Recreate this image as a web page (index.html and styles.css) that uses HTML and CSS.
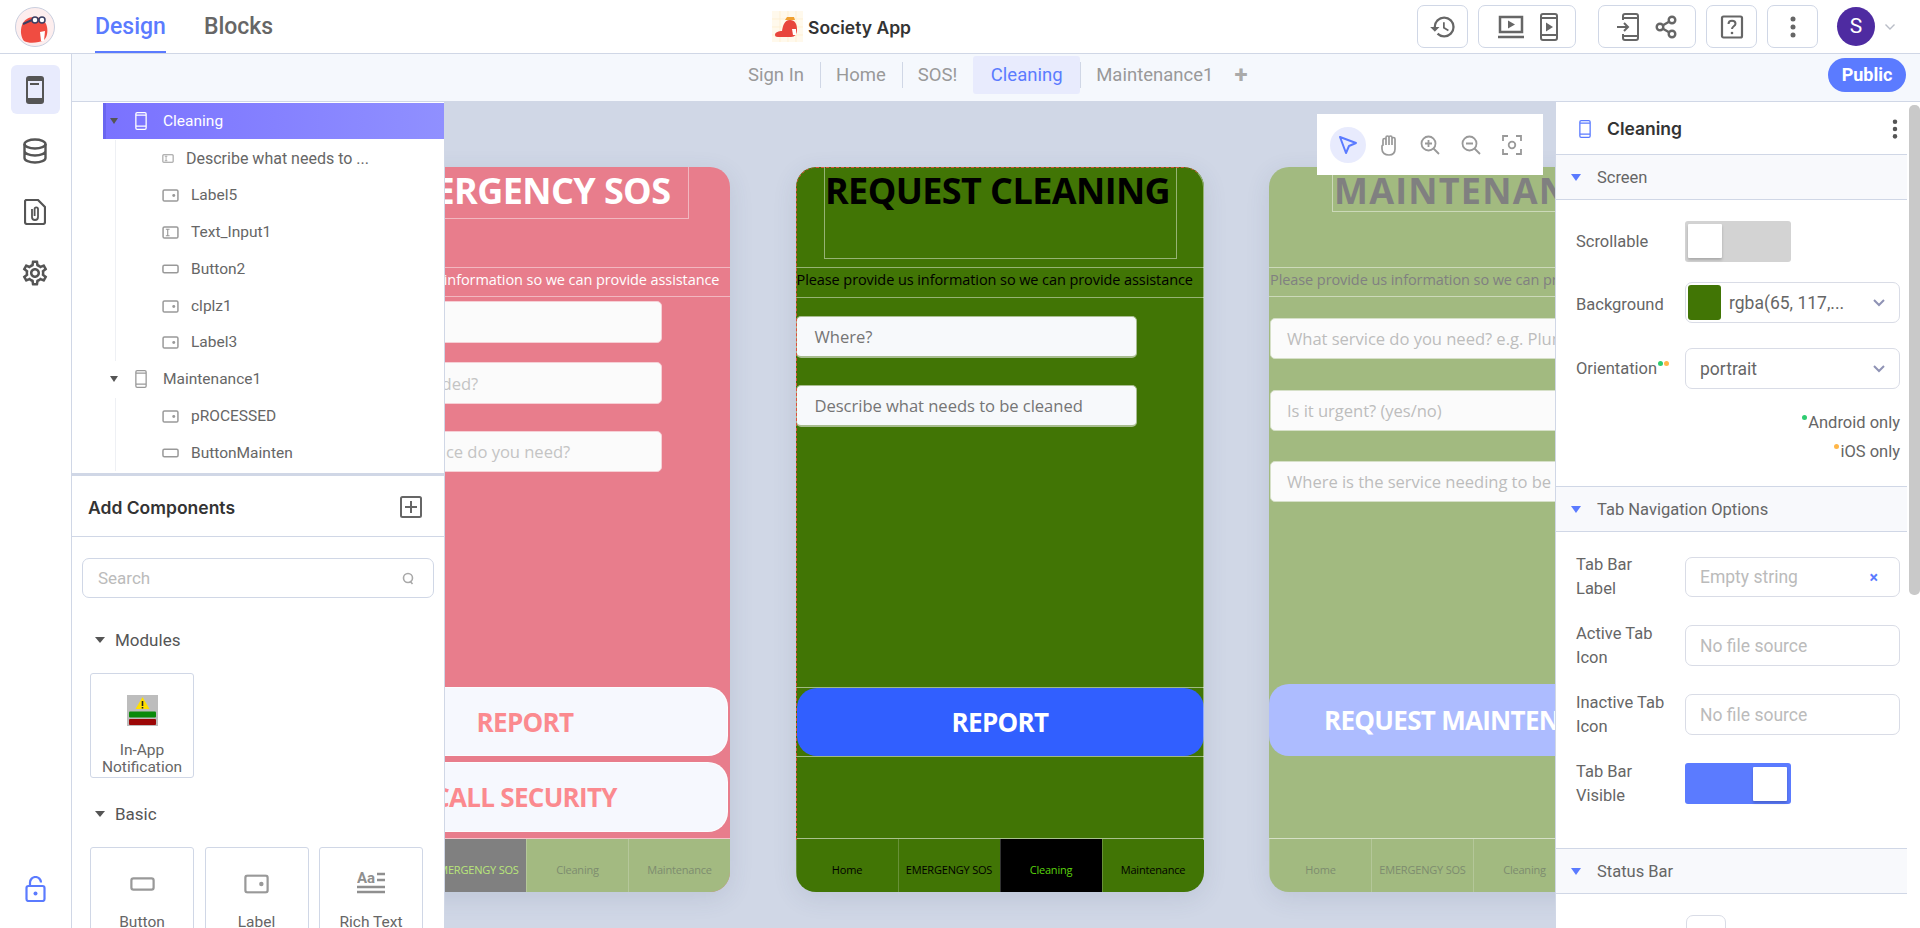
FILE: index.html
```html
<!DOCTYPE html>
<html lang="en">
<head>
  <meta charset="UTF-8">
  <title>Society App</title>
  <link rel="stylesheet" href="styles.css">
</head>
<body>
<svg class="sprites" width="0" height="0">
  <symbol id="i-phone" viewBox="0 0 18 28"><path d="M3 1h12a2 2 0 0 1 2 2v22a2 2 0 0 1-2 2H3a2 2 0 0 1-2-2V3a2 2 0 0 1 2-2zM1 5h16M1 22h16" fill="none" stroke="currentColor" stroke-width="2"/></symbol>
  <symbol id="i-label" viewBox="0 0 18 14"><rect x="1" y="1" width="16" height="12" rx="1.5" fill="none" stroke="currentColor" stroke-width="1.6"/><circle cx="12.5" cy="7" r="1.6" fill="currentColor"/></symbol>
  <symbol id="i-input" viewBox="0 0 18 14"><rect x="1" y="1" width="16" height="12" rx="1.5" fill="none" stroke="currentColor" stroke-width="1.6"/><path d="M4 3.5h4M4 10.5h4M6 3.5v7" fill="none" stroke="currentColor" stroke-width="1.2"/></symbol>
  <symbol id="i-button" viewBox="0 0 18 10"><rect x="1" y="1" width="16" height="8" rx="1.5" fill="none" stroke="currentColor" stroke-width="1.6"/></symbol>
  <symbol id="i-dots" viewBox="0 0 6 24"><circle cx="3" cy="4" r="2.5" fill="currentColor"/><circle cx="3" cy="12" r="2.5" fill="currentColor"/><circle cx="3" cy="20" r="2.5" fill="currentColor"/></symbol>
  <symbol id="i-gear" viewBox="0 0 24 24"><path fill="currentColor" d="M19.43 12.98c.04-.32.07-.64.07-.98 0-.34-.03-.66-.07-.98l2.11-1.65c.19-.15.24-.42.12-.64l-2-3.46c-.09-.16-.26-.25-.44-.25-.06 0-.12.01-.17.03l-2.49 1c-.52-.4-1.08-.73-1.69-.98l-.38-2.65C14.46 2.18 14.25 2 14 2h-4c-.25 0-.46.18-.49.42l-.38 2.65c-.61.25-1.17.59-1.69.98l-2.49-1c-.06-.02-.12-.03-.18-.03-.17 0-.34.09-.43.25l-2 3.46c-.13.22-.07.49.12.64l2.11 1.65c-.04.32-.07.65-.07.98 0 .33.03.66.07.98l-2.11 1.65c-.19.15-.24.42-.12.64l2 3.46c.09.16.26.25.44.25.06 0 .12-.01.17-.03l2.49-1c.52.4 1.08.73 1.69.98l.38 2.65c.03.24.24.42.49.42h4c.25 0 .46-.18.49-.42l.38-2.65c.61-.25 1.17-.59 1.69-.98l2.49 1c.06.02.12.03.18.03.17 0 .34-.09.43-.25l2-3.46c.12-.22.07-.49-.12-.64l-2.11-1.65zm-1.98-1.71c.04.31.05.52.05.73 0 .21-.02.43-.05.73l-.14 1.13.89.7 1.08.84-.7 1.21-1.27-.51-1.04-.42-.9.68c-.43.32-.84.56-1.25.73l-1.06.43-.16 1.13-.2 1.35h-1.4l-.19-1.35-.16-1.13-1.06-.43c-.43-.18-.83-.41-1.23-.71l-.91-.7-1.06.43-1.27.51-.7-1.21 1.08-.84.89-.7-.14-1.13c-.03-.31-.05-.54-.05-.74s.02-.43.05-.73l.14-1.13-.89-.7-1.08-.84.7-1.21 1.27.51 1.04.42.9-.68c.43-.32.84-.56 1.25-.73l1.06-.43.16-1.13.2-1.35h1.39l.19 1.35.16 1.13 1.06.43c.43.18.83.41 1.23.71l.91.7 1.06-.43 1.27-.51.7 1.21-1.07.85-.89.7.14 1.13zM12 8c-2.21 0-4 1.79-4 4s1.79 4 4 4 4-1.79 4-4-1.79-4-4-4zm0 6c-1.1 0-2-.9-2-2s.9-2 2-2 2 .9 2 2-.9 2-2 2z"/></symbol>
</svg>

<!-- Top bar -->
<header class="topbar">
  <div class="brand">
    <svg width="40" height="40" viewBox="0 0 40 40">
      <circle cx="20" cy="20" r="19.5" fill="#fdeeee" stroke="#c9cfdf"/>
      <path d="M9 34c-3-4-4-10-2-16 2-5 6-8 12-8 7 0 12 4 13 10 1 5 0 10-3 13-5 3-15 4-20 1z" fill="#f04c41"/>
      <path d="M8 17l9-4" stroke="#3a3f63" stroke-width="2"/>
      <circle cx="20" cy="13" r="3" fill="#fff" stroke="#3a3f63" stroke-width="1.5"/>
      <circle cx="27" cy="13" r="3" fill="#fff" stroke="#3a3f63" stroke-width="1.5"/>
      <path d="M25 25l1 9h3l1-10z" fill="#fff"/>
    </svg>
  </div>
  <nav class="mode-tabs">
    <a class="mode-tab active">Design</a>
    <a class="mode-tab">Blocks</a>
  </nav>
  <div class="app-title">
    <svg class="app-logo" width="31" height="31" viewBox="0 0 31 31">
      <rect width="31" height="31" fill="#fff9ec"/>
      <path d="M0 8h31M0 16h31M0 24h31M8 0v31M16 0v31M24 0v31" stroke="#fdeccb" stroke-width=".7"/>
      <path d="M3 24c0-3 4-4 7-4 1-5 2-11 8-11 5 0 7 4 7 9 0 5-2 8-6 8H8c-3 0-5 0-5-2z" fill="#e8453c"/>
      <path d="M13 9l2-3h7l1 3z" fill="#f0a030"/>
      <path d="M20 18h4v6h-3z" fill="#fff"/>
    </svg>
    <span>Society App</span>
  </div>
  <div class="actions">
    <div class="action-group single">
      <svg width="28" height="28" viewBox="0 0 24 24"><path fill="currentColor" d="M13 3a9 9 0 0 0-9 9H1l3.89 3.89.07.14L9 12H6c0-3.87 3.13-7 7-7s7 3.13 7 7-3.13 7-7 7c-1.93 0-3.68-.79-4.94-2.06l-1.42 1.42A8.954 8.954 0 0 0 13 21a9 9 0 0 0 0-18zm-1 5v5l4.28 2.54.72-1.21-3.5-2.08V8H12z"/></svg>
    </div>
    <div class="action-group">
      <svg width="28" height="26" viewBox="0 0 28 26"><path d="M3 3h22v15H3zM1 23h26" fill="none" stroke="currentColor" stroke-width="2.5"/><path d="M11 6.5l7 4-7 4z" fill="currentColor"/></svg>
      <svg width="18" height="28" viewBox="0 0 18 28"><use href="#i-phone"/><path d="M6 9.5l7 4.5-7 4.5z" fill="currentColor"/></svg>
    </div>
    <div class="action-group gap-left">
      <svg width="22" height="28" viewBox="0 0 22 28"><path d="M6 7V3a2 2 0 0 1 2-2h11a2 2 0 0 1 2 2v22a2 2 0 0 1-2 2H8a2 2 0 0 1-2-2v-4M6 5h15M6 23h15" fill="none" stroke="currentColor" stroke-width="2"/><path d="M0 14h10M7 10l4 4-4 4" fill="none" stroke="currentColor" stroke-width="2"/></svg>
      <svg width="22" height="24" viewBox="0 0 22 24"><g fill="none" stroke="currentColor" stroke-width="2.4"><circle cx="5" cy="12" r="3.3"/><circle cx="17" cy="5" r="3.3"/><circle cx="17" cy="19" r="3.3"/><path d="M8 10.3l6-3.5M8 13.7l6 3.5"/></g></svg>
    </div>
    <div class="action-group single">
      <svg width="24" height="24" viewBox="0 0 24 24"><rect x="2" y="1.5" width="20" height="21" rx="1.5" fill="none" stroke="currentColor" stroke-width="2.2"/><path d="M8.5 9c0-2 1.5-3.3 3.5-3.3S15.500 7 15.500 8.700c0 2.600-3.500 2.600-3.500 5.300" fill="none" stroke="currentColor" stroke-width="2"/><circle cx="12" cy="18" r="1.3" fill="currentColor"/></svg>
    </div>
    <div class="action-group single">
      <svg width="6" height="24"><use href="#i-dots"/></svg>
    </div>
    <div class="avatar">S</div>
    <svg class="avatar-caret" width="10" height="6" viewBox="0 0 10 6"><path d="M.5.5L5 5 9.5.5" fill="none" stroke="#b9bdc7" stroke-width="1.4"/></svg>
  </div>
</header>

<div class="shell">
  <!-- Left icon rail -->
  <aside class="rail">
    <div class="rail-item active">
      <svg width="18" height="28" viewBox="0 0 18 28"><path fill="currentColor" d="M3 0h12a3 3 0 0 1 3 3v22a3 3 0 0 1-3 3H3a3 3 0 0 1-3-3V3a3 3 0 0 1 3-3z"/><rect x="2" y="5" width="14" height="17" fill="#e8ebfd"/><rect x="4" y="7" width="9" height="2" fill="currentColor"/></svg>
    </div>
    <div class="rail-item">
      <svg width="24" height="26" viewBox="0 0 24 26"><g fill="none" stroke="currentColor" stroke-width="2.4"><ellipse cx="12" cy="6" rx="10.5" ry="4.5"/><path d="M1.5 6v14c0 2.5 4.700 4.500 10.500 4.500S22.500 22.500 22.500 20V6M1.500 13c0 2.500 4.700 4.500 10.500 4.500S22.500 15.500 22.500 13"/></g></svg>
    </div>
    <div class="rail-item">
      <svg width="22" height="26" viewBox="0 0 22 26"><path d="M2 1h12l7 7v15a2 2 0 0 1-2 2H3a2 2 0 0 1-2-2V2z" fill="none" stroke="currentColor" stroke-width="2.2"/><path d="M8 10v8a3 3 0 0 0 6 0v-8a1.7 1.7 0 0 0-3.4 0v7" fill="none" stroke="currentColor" stroke-width="1.8"/></svg>
    </div>
    <div class="rail-item">
      <svg width="30" height="30"><use href="#i-gear"/></svg>
    </div>
    <div class="rail-lock">
      <svg width="21" height="26" viewBox="0 0 21 26"><path d="M5 10V6.500a5.500 5.500 0 0 1 11 0" fill="none" stroke="currentColor" stroke-width="2.2"/><rect x="1.5" y="10" width="18" height="15" rx="2" fill="none" stroke="currentColor" stroke-width="2.2"/><circle cx="10.5" cy="17.5" r="2" fill="currentColor"/></svg>
    </div>
  </aside>

  <main class="workspace">
    <!-- Screen tabs -->
    <div class="screen-tabs">
      <a class="screen-tab">Sign In</a>
      <a class="screen-tab">Home</a>
      <a class="screen-tab">SOS!</a>
      <a class="screen-tab active">Cleaning</a>
      <a class="screen-tab last">Maintenance1</a>
      <span class="add-screen">+</span>
      <span class="public-pill">Public</span>
    </div>

    <div class="canvas">
      <!-- Emergency phone -->
      <section class="phone phone-sos">
        <div class="screen">
          <div class="title">EMERGENCY SOS</div>
          <div class="subtitle">Please provide us information so we can provide assistance</div>
          <div class="field f1"></div>
          <div class="field f2">What is needed?</div>
          <div class="field f3">What service do you need?</div>
          <div class="cta cta1">REPORT</div>
          <div class="cta cta2">CALL SECURITY</div>
        </div>
        <div class="tabbar">
          <span class="tab">Home</span>
          <span class="tab active">EMERGENGY SOS</span>
          <span class="tab">Cleaning</span>
          <span class="tab">Maintenance</span>
        </div>
      </section>

      <!-- Cleaning phone -->
      <section class="phone phone-clean">
        <div class="screen">
          <div class="title">REQUEST CLEANING</div>
          <div class="subtitle">Please provide us information so we can provide assistance</div>
          <div class="field f1">Where?</div>
          <div class="field f2">Describe what needs to be cleaned</div>
          <div class="cta-box"><div class="cta">REPORT</div></div>
        </div>
        <div class="tabbar">
          <span class="tab">Home</span>
          <span class="tab">EMERGENGY SOS</span>
          <span class="tab active">Cleaning</span>
          <span class="tab">Maintenance</span>
        </div>
      </section>

      <!-- Maintenance phone -->
      <section class="phone phone-maint">
        <div class="screen">
          <div class="title">MAINTENANCE</div>
          <div class="subtitle">Please provide us information so we can provide assistance</div>
          <div class="field f1">What service do you need? e.g. Plumbing</div>
          <div class="field f2">Is it urgent? (yes/no)</div>
          <div class="field f3">Where is the service needing to be done?</div>
          <div class="cta">REQUEST MAINTENANCE</div>
        </div>
        <div class="tabbar">
          <span class="tab">Home</span>
          <span class="tab">EMERGENGY SOS</span>
          <span class="tab">Cleaning</span>
          <span class="tab">Maintenance</span>
        </div>
      </section>

      <!-- Left panel: tree and components -->
      <aside class="left-panel">
        <div class="tree">
          <div class="tree-row selected">
            <i class="caret"></i>
            <svg class="tree-screen" width="12" height="18"><use href="#i-phone"/></svg>
            <span>Cleaning</span>
          </div>
          <div class="tree-children">
            <div class="tree-row child small"><svg width="12" height="9"><use href="#i-input"/></svg><span>Describe what needs to ...</span></div>
            <div class="tree-row child"><svg width="17" height="13"><use href="#i-label"/></svg><span>Label5</span></div>
            <div class="tree-row child"><svg width="17" height="13"><use href="#i-input"/></svg><span>Text_Input1</span></div>
            <div class="tree-row child"><svg width="17" height="10"><use href="#i-button"/></svg><span>Button2</span></div>
            <div class="tree-row child"><svg width="17" height="13"><use href="#i-label"/></svg><span>clplz1</span></div>
            <div class="tree-row child"><svg width="17" height="13"><use href="#i-label"/></svg><span>Label3</span></div>
          </div>
          <div class="tree-row">
            <i class="caret"></i>
            <svg class="tree-screen" width="12" height="18"><use href="#i-phone"/></svg>
            <span>Maintenance1</span>
          </div>
          <div class="tree-children">
            <div class="tree-row child"><svg width="17" height="13"><use href="#i-label"/></svg><span>pROCESSED</span></div>
            <div class="tree-row child"><svg width="17" height="10"><use href="#i-button"/></svg><span>ButtonMainten</span></div>
          </div>
        </div>

        <div class="add-head">
          <h3>Add Components</h3>
          <svg width="22" height="22" viewBox="0 0 22 22"><rect x="1" y="1" width="20" height="20" rx="1.5" fill="none" stroke="#666" stroke-width="2"/><path d="M11 5v12M5 11h12" stroke="#666" stroke-width="2"/></svg>
        </div>
        <div class="search">
          <input type="text" placeholder="Search">
          <svg width="12" height="13" viewBox="0 0 12 13"><circle cx="6" cy="6" r="4.5" fill="none" stroke="#a9a9a9" stroke-width="1.6"/><path d="M8 9l2.5 3" stroke="#a9a9a9" stroke-width="1.6"/></svg>
        </div>

        <div class="group-head"><i class="caret"></i>Modules</div>
        <div class="cards">
          <div class="card">
            <svg class="module-icon" width="31" height="31" viewBox="0 0 31 31">
              <rect width="31" height="31" fill="#bdbdbd"/>
              <path d="M15.5 2l7 12h-14z" fill="#ffdf00"/>
              <path d="M15.5 6v5M15.5 12v1.5" stroke="#222" stroke-width="1.6"/>
              <rect x="2" y="16.5" width="27" height="6" rx="1" fill="#0a8a0a"/>
              <rect x="2" y="24" width="27" height="6" rx="1" fill="#9c0606"/>
            </svg>
            <span class="card-name">In-App Notification</span>
          </div>
        </div>

        <div class="group-head basic"><i class="caret"></i>Basic</div>
        <div class="cards">
          <div class="card">
            <svg class="basic-icon" width="25" height="15" viewBox="0 0 18 10"><use href="#i-button"/></svg>
            <span class="card-name">Button</span>
          </div>
          <div class="card">
            <svg class="basic-icon" width="25" height="20" viewBox="0 0 18 14"><use href="#i-label"/></svg>
            <span class="card-name">Label</span>
          </div>
          <div class="card">
            <svg class="basic-icon rich" width="28" height="24" viewBox="0 0 28 24">
              <text x="0" y="13" font-family="Roboto" font-weight="700" font-size="15" fill="#8f8f8f">Aa</text>
              <path d="M20 4h8M20 10h8M0 17h28M0 22h28" stroke="#8f8f8f" stroke-width="2.5"/>
            </svg>
            <span class="card-name">Rich Text</span>
          </div>
        </div>
      </aside>

      <!-- Floating canvas tools -->
      <div class="tools">
        <span class="tool active">
          <svg width="20" height="20" viewBox="0 0 20 20"><path d="M2 2l16 6-7 3-3 7z" fill="none" stroke="currentColor" stroke-width="2" stroke-linejoin="round"/></svg>
        </span>
        <span class="tool">
          <svg width="20" height="22" viewBox="0 0 20 22"><path d="M4 11V6a1.5 1.5 0 0 1 3 0V3.5a1.5 1.5 0 0 1 3 0 1.5 1.5 0 0 1 3 0V5a1.5 1.5 0 0 1 3 0v10c0 3.5-2 6-6 6s-7-2-7-6v-3a1.5 1.5 0 0 1 1-1zM7 6v5M10 3.5V11M13 3.5V11" fill="none" stroke="currentColor" stroke-width="1.7"/></svg>
        </span>
        <span class="tool">
          <svg width="20" height="20" viewBox="0 0 20 20"><circle cx="8.5" cy="8.5" r="7" fill="none" stroke="currentColor" stroke-width="1.8"/><path d="M13.5 13.5L19 19M8.5 5v7M5 8.5h7" stroke="currentColor" stroke-width="1.8"/></svg>
        </span>
        <span class="tool">
          <svg width="20" height="20" viewBox="0 0 20 20"><circle cx="8.5" cy="8.5" r="7" fill="none" stroke="currentColor" stroke-width="1.8"/><path d="M13.5 13.5L19 19M5 8.5h7" stroke="currentColor" stroke-width="1.8"/></svg>
        </span>
        <span class="tool">
          <svg width="20" height="20" viewBox="0 0 20 20"><path d="M1 6V1h5M14 1h5v5M19 14v5h-5M6 19H1v-5" fill="none" stroke="currentColor" stroke-width="1.8"/><circle cx="10" cy="10" r="3.3" fill="none" stroke="currentColor" stroke-width="1.8"/></svg>
        </span>
      </div>

      <!-- Right panel: properties -->
      <aside class="props">
        <div class="props-inner">
          <div class="props-head">
            <svg class="props-phone" width="12" height="18"><use href="#i-phone"/></svg>
            <h3>Cleaning</h3>
            <svg class="props-dots" width="6" height="22" viewBox="0 0 6 24"><use href="#i-dots"/></svg>
          </div>

          <div class="section-head"><i class="caret blue"></i>Screen</div>
          <div class="fields screen-fields">
            <div class="row">
              <label>Scrollable</label>
              <span class="toggle"><i class="knob"></i></span>
            </div>
            <div class="row">
              <label class="low">Background</label>
              <div class="select color-select">
                <i class="swatch"></i><span>rgba(65, 117,...</span>
                <svg width="12" height="8" viewBox="0 0 12 8"><path d="M1 1l5 5 5-5" fill="none" stroke="#8f93b5" stroke-width="2"/></svg>
              </div>
            </div>
            <div class="row">
              <label>Orientation<sup class="dot green"></sup><sup class="dot orange"></sup></label>
              <div class="select">
                <span>portrait</span>
                <svg width="12" height="8" viewBox="0 0 12 8"><path d="M1 1l5 5 5-5" fill="none" stroke="#8f93b5" stroke-width="2"/></svg>
              </div>
            </div>
            <div class="note n1"><sup class="dot green"></sup>Android only</div>
            <div class="note n2"><sup class="dot orange"></sup>iOS only</div>
          </div>

          <div class="section-head"><i class="caret blue"></i>Tab Navigation Options</div>
          <div class="fields tab-fields">
            <div class="row">
              <label class="two">Tab Bar<br>Label</label>
              <div class="text-input"><input type="text" placeholder="Empty string"><b class="clear">×</b></div>
            </div>
            <div class="row">
              <label class="two">Active Tab<br>Icon</label>
              <div class="text-input"><input type="text" placeholder="No file source"></div>
            </div>
            <div class="row">
              <label class="two">Inactive Tab<br>Icon</label>
              <div class="text-input"><input type="text" placeholder="No file source"></div>
            </div>
            <div class="row">
              <label class="two">Tab Bar<br>Visible</label>
              <span class="toggle on"><i class="knob"></i></span>
            </div>
          </div>

          <div class="section-head"><i class="caret blue"></i>Status Bar</div>
          <div class="status-check"></div>
        </div>
        <div class="scrollbar"></div>
      </aside>
    </div>
  </main>
</div>
</body>
</html>
```
FILE: styles.css
```css
* {
    box-sizing: border-box;
}

html, body {
    margin: 0;
    height: 928px;
    overflow: hidden;
}

body {
    font-family: Roboto, Arial, sans-serif;
    color: #666;
    background: #fff;
}

h3 {
    margin: 0;
}

.sprites {
    position: absolute;
}

svg {
    display: block;
    flex: none;
}

/* top bar */
.topbar {
    height: 54px;
    display: flex;
    align-items: center;
    border-bottom: 1px solid #d0d7e6;
    position: relative;
}

.brand {
    margin-left: 15px;
    width: 40px;
}

.mode-tabs {
    display: flex;
    gap: 38px;
    margin-left: 40px;
    height: 53px;
}

.mode-tab {
    font-size: 23px;
    font-weight: 500;
    line-height: 54px;
    height: 53px;
    color: #666;
}

.mode-tab.active {
    color: #5b7bff;
    border-bottom: 2px solid #5b7bff;
}

.app-title {
    position: absolute;
    left: 772px;
    top: 11px;
    display: flex;
    align-items: center;
    gap: 5px;
    font-family: Inter, sans-serif;
    font-size: 17.5px;
    font-weight: 600;
    color: #333;
}

.app-title span {
    padding-top: 2px;
}

.actions {
    margin-left: auto;
    display: flex;
    align-items: center;
    height: 43px;
    padding-right: 25px;
    color: #666;
}

.action-group {
    width: 98px;
    height: 43px;
    border: 1px solid #d0d7e6;
    border-radius: 7px;
    display: flex;
    align-items: center;
    justify-content: space-around;
    padding: 0 10px;
    margin-left: 10px;
}

.action-group.single {
    width: 51px;
    justify-content: center;
    padding: 0;
}

.action-group.gap-left {
    margin-left: 22px;
}

.avatar {
    width: 38px;
    height: 39px;
    border-radius: 50%;
    background: #4e2ba1;
    color: #fff;
    font-size: 21px;
    line-height: 39px;
    text-align: center;
    margin-left: 19px;
}

.avatar-caret {
    margin-left: 10px;
}

/* shell */
.shell {
    display: flex;
    height: 874px;
}

.rail {
    width: 72px;
    border-right: 1px solid #d0d7e6;
    display: flex;
    flex-direction: column;
    align-items: center;
    padding-top: 11px;
    gap: 12px;
    color: #555;
    flex: none;
    padding-right: 1px;
}

.rail-item {
    width: 49px;
    height: 49px;
    display: flex;
    align-items: center;
    justify-content: center;
    border-radius: 6px;
}

.rail-item.active {
    background: #e8ebfd;
}

.rail-lock {
    margin-top: auto;
    margin-bottom: 26px;
    color: #5b7bff;
}

.workspace {
    flex: 1;
    display: flex;
    flex-direction: column;
    min-width: 0;
}

/* screen tabs */
.screen-tabs {
    height: 48px;
    background: #f5f8fd;
    border-bottom: 1px solid #d0d7e6;
    display: flex;
    align-items: center;
    padding: 0 0 6px 660px;
    font-size: 18.5px;
    color: #999;
    position: relative;
}

.screen-tab {
    padding: 0 16px;
    height: 38px;
    line-height: 38px;
    position: relative;
    border-radius: 3px;
}

.screen-tab::after {
    content: "";
    position: absolute;
    right: -1px;
    top: 6px;
    height: 26px;
    width: 1px;
    background: #d0d7e6;
}

.screen-tab.active {
    width: 107px;
    text-align: center;
    background: #e8ebfd;
    color: #5b7bff;
}

.screen-tab.last::after {
    display: none;
}

.add-screen {
    font-size: 24px;
    font-weight: 700;
    color: #aaa;
    margin-left: 5px;
}

.public-pill {
    position: absolute;
    right: 14px;
    top: 4px;
    width: 78px;
    height: 34px;
    border-radius: 17px;
    background: #5b7bff;
    color: #fff;
    font-size: 18px;
    font-weight: 700;
    line-height: 34px;
    text-align: center;
}

/* canvas */
.canvas {
    flex: 1;
    background: #d0d7e6;
    position: relative;
    overflow: hidden;
    display: flex;
    gap: 65.5px;
    padding: 65px 0 0 250px;
}

.phone {
    flex: none;
    width: 408px;
    height: 725px;
    border-radius: 20px;
    overflow: hidden;
    display: flex;
    flex-direction: column;
    box-shadow: 0 6px 24px rgba(60, 70, 110, .12);
    font-family: "Open Sans", "Noto Sans", sans-serif;
}

.screen {
    height: 672px;
    display: flex;
    flex-direction: column;
    border-bottom: 1px solid rgba(255, 255, 255, .55);
}

.title {
    font-size: 36px;
    font-weight: 700;
    letter-spacing: -.6px;
    line-height: 48px;
    text-align: center;
    white-space: nowrap;
    border: 1px solid rgba(255, 255, 255, .45);
    border-top: 0;
    flex: none;
}

.subtitle {
    font-size: 14.5px;
    line-height: 23px;
    letter-spacing: -.08px;
    white-space: nowrap;
    border: 1px solid rgba(255, 255, 255, .45);
    border-width: 1px 0;
    padding-left: 1px;
    flex: none;
    overflow: hidden;
}

.field {
    flex: none;
    font-size: 16.6px;
    letter-spacing: -.05px;
    padding-left: 18px;
    display: flex;
    align-items: center;
    white-space: nowrap;
    overflow: hidden;
    background: #fbfbfb;
    border-radius: 5px;
    border: 1px solid rgba(255, 255, 255, .7);
}

.cta {
    flex: none;
    font-size: 26px;
    font-weight: 700;
    letter-spacing: -.7px;
    border-radius: 20px;
    display: flex;
    align-items: center;
    justify-content: center;
    white-space: nowrap;
}

.tabbar {
    height: 53px;
    display: flex;
    flex: none;
}

.tab {
    width: 102px;
    font-size: 11px;
    letter-spacing: -.2px;
    white-space: nowrap;
    display: flex;
    align-items: center;
    justify-content: center;
    padding-top: 8px;
    border-left: 1px solid rgba(255, 255, 255, .2);
}

/* sos phone */
.phone-sos {
    background: #e87d8c;
    color: #fff;
}

.phone-sos .title {
    width: 326px;
    height: 52px;
    margin-left: 41px;
}

.phone-sos .subtitle {
    margin-top: 48px;
    height: 30px;
}

.phone-sos .field {
    width: 340px;
    color: #c4c4c4;
    border-color: #f6d0d6;
}

.phone-sos .f1 {
    margin-top: 4px;
    height: 42px;
}

.phone-sos .f2 {
    margin-top: 19px;
    height: 42px;
    padding-left: 29px;
}

.phone-sos .f3 {
    margin-top: 27px;
    height: 41px;
    padding-left: 42px;
}

.phone-sos .cta {
    background: #f6f8fe;
    color: #fb8a8f;
    width: 406px;
    border: 1px solid rgba(255, 255, 255, .7);
}

.phone-sos .cta1 {
    margin-top: 215px;
    height: 69px;
}

.phone-sos .cta2 {
    margin-top: 6px;
    height: 70px;
}

.phone-sos .tabbar {
    background: #a3ba81;
    color: #7d8c6f;
}

.phone-sos .tab.active {
    background: #808080;
    color: #b9e67a;
}

/* cleaning phone */
.phone-clean {
    background: #417505;
    color: #000;
    position: relative;
}

/* selection marker of the open screen */
.phone-clean::after {
    content: "";
    position: absolute;
    left: 0;
    top: 0;
    right: 0;
    height: 672px;
    border-top: 1px dashed #e0503c;
    border-left: 1px dashed #e0503c;
    border-right: 1px solid rgba(255, 255, 255, .45);
    border-radius: 20px 20px 0 0;
}

.phone-clean .title {
    width: 353px;
    height: 92px;
    margin-left: 28px;
    padding-right: 5px;
}

.phone-clean .subtitle {
    margin-top: 8px;
    height: 31px;
}

.phone-clean .field {
    width: 341px;
    height: 42px;
    background: #f7f9fb;
    color: #757575;
    border: 1px solid #a8bd90;
    border-bottom-width: 2px;
}

.phone-clean .f1 {
    margin-top: 18px;
}

.phone-clean .f2 {
    margin-top: 27px;
}

.cta-box {
    margin-top: 260px;
    height: 70px;
    padding-left: 1px;
    border: 1px solid rgba(255, 255, 255, .5);
    border-width: 1px 0;
    flex: none;
}

.phone-clean .cta {
    height: 100%;
    background: #315fff;
    color: #fff;
}

.phone-clean .tab.active {
    background: #000;
    color: #5ad40c;
}

/* maintenance phone */
.phone-maint {
    background: #a2ba80;
    color: #808080;
}

.phone-maint .title {
    width: 282px;
    height: 45px;
    margin-left: 63px;
    text-align: left;
    padding-left: 1px;
    letter-spacing: 1.2px;
}

.phone-maint .subtitle {
    margin-top: 55px;
    height: 30px;
}

.phone-maint .field {
    width: 340px;
    margin-left: 1px;
    height: 41px;
    color: #bdbdbd;
    border-color: #d6e0c8;
    padding-left: 16px;
}

.phone-maint .f1 {
    margin-top: 21px;
}

.phone-maint .f2 {
    margin-top: 31px;
}

.phone-maint .f3 {
    margin-top: 30px;
}

.phone-maint .cta {
    margin-top: 182px;
    height: 72px;
    background: #adbcff;
    color: #fff;
    justify-content: flex-start;
    padding-left: 55px;
}

.phone-maint .tabbar {
    color: #7d8c6f;
}

/* left panel */
.left-panel {
    position: absolute;
    left: 0;
    top: 0;
    bottom: 0;
    width: 373px;
    background: #fff;
    border-right: 1px solid #d0d7e6;
    overflow: hidden;
}

.tree {
    height: 374px;
    padding: 1px 0 0 31px;
    font-size: 15.5px;
    overflow: hidden;
    border-bottom: 3px solid #d0d7e6;
}

.tree-row {
    height: 36.8px;
    display: flex;
    align-items: center;
    white-space: nowrap;
    color: #666;
}

.tree-row.selected {
    height: 36px;
    margin-bottom: 1px;
    background: linear-gradient(90deg, #7a72ff, #9090ff);
    border-left: 3px solid #6a66f0;
    margin-right: -1px;
    color: #fff;
}

.tree-row.selected .caret {
    margin-left: 4px;
    border-top-color: #555;
}

.caret {
    display: block;
    width: 0;
    height: 0;
    border-left: 4.5px solid transparent;
    border-right: 4.5px solid transparent;
    border-top: 6px solid #555;
    margin-left: 7px;
    flex: none;
}

.tree-screen {
    margin-left: 17px;
    margin-right: 16px;
}

.tree-row:not(.selected) .tree-screen {
    color: #999;
}

.tree-children {
    border-left: 1px solid #eef0f4;
    margin-left: 12px;
}

.tree-row.child {
    padding-left: 46px;
    color: #666;
}

.tree-row.child svg {
    color: #999;
    margin-right: 12px;
    margin-top: 1px;
}

.tree-row.child.small {
    font-size: 16px;
}

.add-head {
    height: 61px;
    border-bottom: 1px solid #d0d7e6;
    display: flex;
    align-items: center;
    justify-content: space-between;
    padding: 2px 22px 0 16px;
}

.add-head h3 {
    font-family: Inter, sans-serif;
    font-size: 17.5px;
    font-weight: 600;
    color: #333;
}

.search {
    margin: 21px 10px 0;
    height: 40px;
    border: 1px solid #d0d7e6;
    border-radius: 7px;
    display: flex;
    align-items: center;
    padding: 0 19px 0 15px;
}

.search input {
    flex: 1;
    border: 0;
    outline: 0;
    font: inherit;
    font-size: 17px;
    min-width: 0;
    padding: 0;
}

input::placeholder {
    color: #bbb;
    opacity: 1;
}

.group-head {
    margin: 31px 0 0 22px;
    display: flex;
    align-items: center;
    gap: 10px;
    font-size: 17px;
    height: 22px;
    color: #555;
}

.group-head .caret {
    margin-left: 1px;
    border-left-width: 5px;
    border-right-width: 5px;
}

.group-head.basic {
    margin-top: 25px;
}

.cards {
    display: flex;
    gap: 10.5px;
    margin: 22px 0 0 18px;
}

.card {
    width: 104px;
    height: 105px;
    border: 1px solid #d0d7e6;
    border-radius: 3px;
    display: flex;
    flex-direction: column;
    align-items: center;
    text-align: center;
}

.module-icon {
    margin-top: 21px;
}

.card-name {
    font-size: 15.5px;
    line-height: 17px;
    margin-top: 16px;
    color: #666;
}

.basic-icon {
    color: #999;
    margin-top: 26px;
    height: 20px;
}

.basic-icon + .card-name {
    margin-top: 20px;
}

.basic-icon.rich {
    height: 24px;
    margin-top: 22px;
}

/* floating tools */
.tools {
    position: absolute;
    left: 1245px;
    top: 12px;
    width: 226px;
    height: 61px;
    background: #fff;
    display: flex;
    align-items: center;
    padding-left: 13px;
    gap: 5px;
    color: #999;
}

.tool {
    width: 36px;
    height: 36px;
    border-radius: 50%;
    display: flex;
    align-items: center;
    justify-content: center;
}

.tool.active {
    background: #e8ebfd;
    color: #5b7bff;
}

/* right panel */
.props {
    position: absolute;
    right: 0;
    top: 0;
    bottom: 0;
    width: 365px;
    background: #fff;
    border-left: 1px solid #d0d7e6;
    font-size: 16.5px;
}

.props-inner {
    width: 351px;
}

.props-head {
    height: 53px;
    display: flex;
    align-items: center;
    padding: 1px 0 0 23px;
    border-bottom: 1px solid #d0d7e6;
    color: #5b7bff;
}

.props-head h3 {
    font-family: Inter, sans-serif;
    font-size: 17.5px;
    font-weight: 600;
    color: #333;
    margin-left: 16px;
}

.props-dots {
    margin-left: auto;
    margin-right: 9px;
    color: #555;
}

.section-head {
    height: 45px;
    background: #f8f9fc;
    border-bottom: 1px solid #d0d7e6;
    display: flex;
    align-items: center;
    padding-left: 15px;
}

.fields + .section-head {
    border-top: 1px solid #d0d7e6;
    height: 46px;
}

.section-head .caret {
    margin: 0 16px 0 0;
    border-left-width: 5px;
    border-right-width: 5px;
    border-top-width: 7px;
}

.caret.blue {
    border-top-color: #5b7bff;
}

.fields {
    padding-left: 20px;
    padding-bottom: 1px;
}

.row {
    display: flex;
    align-items: center;
    min-height: 40px;
}

.row label {
    width: 109px;
    flex: none;
    color: #666;
}

.row label.low {
    padding-top: 4px;
}

.row label.two {
    line-height: 24px;
    margin: -4px 0;
}

.screen-fields {
    padding-top: 21px;
    height: 286px;
}

.screen-fields .row + .row {
    margin-top: 20px;
}

.screen-fields .row:nth-child(3) {
    margin-top: 25px;
}

.tab-fields {
    padding-top: 25px;
    height: 316px;
}

.tab-fields .row + .row {
    margin-top: 28px;
}

.tab-fields .row:first-child .text-input {
    height: 40px;
}

.toggle {
    width: 106px;
    height: 41px;
    background: #d3d3d3;
    border-radius: 3px;
    padding: 3px;
    display: flex;
}

.knob {
    width: 34px;
    height: 34px;
    background: #fff;
    border-radius: 1px;
    box-shadow: 0 2px 3px rgba(0, 0, 0, .2);
}

.toggle.on {
    background: #5b7bff;
    justify-content: flex-end;
    padding: 4px;
}

.select, .text-input {
    width: 215px;
    height: 41px;
    border: 1px solid #d9dce6;
    border-radius: 7px;
    display: flex;
    align-items: center;
    padding-left: 14px;
    font-size: 17.5px;
    color: #666;
}

.select svg {
    margin-left: auto;
    margin-right: 14px;
}

.color-select {
    padding-left: 2px;
}

.swatch {
    width: 33px;
    height: 35px;
    background: #417505;
    border-radius: 3px;
    margin-right: 8px;
}

.text-input input {
    flex: 1;
    min-width: 0;
    border: 0;
    outline: 0;
    padding: 0;
    font: inherit;
}

.clear {
    color: #5b7bff;
    margin-right: 21px;
    font-size: 16px;
}

.dot {
    display: inline-block;
    width: 5px;
    height: 5px;
    border-radius: 50%;
    vertical-align: 8px;
    margin-left: 1px;
}

.dot.green {
    background: #2ecc71;
}

.dot.orange {
    background: #ffb648;
}

.note {
    text-align: right;
    width: 324px;
    line-height: 20px;
}

.note .dot {
    margin-right: 1px;
}

.n1 {
    margin-top: 24px;
}

.n2 {
    margin-top: 9px;
}

.status-check {
    width: 40px;
    height: 40px;
    border: 1px solid #d9dce6;
    border-radius: 7px;
    margin: 21px 0 0 130px;
}

.scrollbar {
    position: absolute;
    right: 0;
    top: 3px;
    width: 11px;
    height: 490px;
    background: #c9c9c9;
    border-radius: 5px;
}
```
